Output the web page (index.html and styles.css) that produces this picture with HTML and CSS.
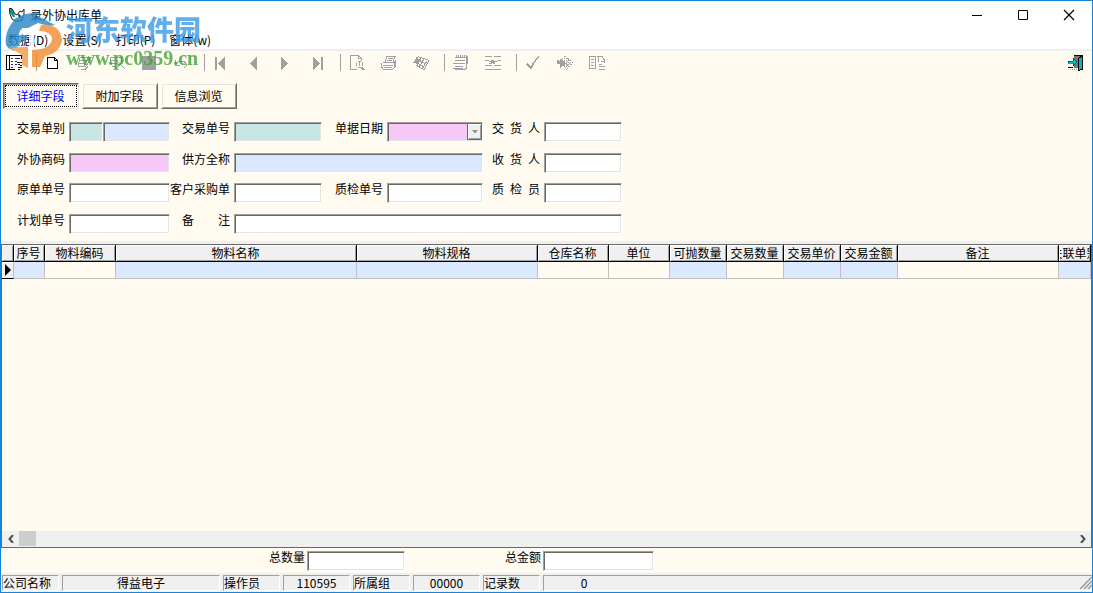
FILE: index.html
```html
<!DOCTYPE html>
<html lang="zh-CN">
<head>
<meta charset="utf-8">
<title>录外协出库单</title>
<link rel="stylesheet" href="styles.css">
</head>
<body>
<div class="window">
  <header class="titlebar">
    <svg class="app-icon" viewBox="0 0 16 14" width="16" height="14"><path d="M0 0h3l2 4 1 5H4L1 5z" fill="#0a9f8c"/><path d="M0 0l3 1 3 5 2 1 3-4 2 1 2-3v6l-2 2v3l-3 1H6L3 11 1 6z" fill="none" stroke="#222"/><path d="M9 5l3 3-2 3z" fill="#222"/><path d="M14 9v3M5 12l3-2" stroke="#0a9f8c" fill="none"/></svg>
    <h1 class="title">录外协出库单</h1>
    <div class="window-controls">
      <button aria-label="最小化"><svg width="12" height="12"><path d="M1 6.500h10" stroke="#000"/></svg></button>
      <button aria-label="最大化"><svg width="12" height="12"><path d="M1.500 1.500h9v9h-9z" fill="none" stroke="#000"/></svg></button>
      <button aria-label="关闭"><svg width="12" height="12"><path d="M1 1l10 10M11 1L1 11" stroke="#000" stroke-width="1.200"/></svg></button>
    </div>
  </header>
  <nav class="menubar">
    <button>数据(D)</button><button>设置(S)</button><button>打印(P)</button><button>窗体(w)</button>
  </nav>

  <div class="toolbar" role="toolbar">
    <button class="tool tool-first" aria-label="列表"><svg viewBox="0 0 16 16" fill="none" stroke="#000"><path d="M0 .5h16M.5 1v13M3.500 1v13M0 14.500h9M15.500 1v3"/><path d="M5 3.500h2M9 3.500h5M5 6.500h2M9 6.500h2M5 9.500h2M9 9.500h2M5 12.500h2" stroke="#22229a"/><path d="M11 7.500h5M12 9.500h2M14 10.500h2M12 12.500h4M12 14.500h2" stroke="#111"/></svg></button>
    <span class="sep"></span>
    <button class="tool" aria-label="新建"><svg viewBox="0 0 16 16"><path d="M2.500 2.500h7l3 3v8h-10z" fill="#fff" stroke="#000"/><path d="M9.500 2.500v3h3" fill="none" stroke="#000"/></svg></button>
    <button class="tool off" aria-label="修改"><svg viewBox="0 0 16 16"><path d="M3 2.500h12M2 5.500h9M1 8.500h8M1 11.500h6M14 3l-5 8-3 1M3 3L1 11M4 14.500h4l3-3M12 3l-5 8"/></svg></button>
    <button class="tool off" aria-label="删除"><svg viewBox="0 0 16 16"><path d="M1 2.500h11M1 5.500h8M1 8.500h8M12 2v5M1 2v7M7 5l9 9M15 5l-8 9M3 11.500h4"/></svg></button>
    <button class="tool off" aria-label="保存"><svg viewBox="0 0 16 16"><path class="solid" d="M1 1h14v14H1z"/></svg></button>
    <button class="tool off" aria-label="撤消"><svg viewBox="0 0 16 16"><path d="M2 5v5h5M3 9l3-3h5l2 3v2l-2 2"/></svg></button>
    <span class="sep"></span>
    <button class="tool off" aria-label="首条"><svg viewBox="0 0 16 16"><path class="solid" d="M2 2h2v13H2zM12 2v13L5 8.500z"/></svg></button>
    <button class="tool off" aria-label="上一条"><svg viewBox="0 0 16 16"><path class="solid" d="M12 2v13L5 8.500z"/></svg></button>
    <button class="tool off" aria-label="下一条"><svg viewBox="0 0 16 16"><path class="solid" d="M4 2v13l7-6.500z"/></svg></button>
    <button class="tool off" aria-label="末条"><svg viewBox="0 0 16 16"><path class="solid" d="M4 2v13l7-6.500zM12 2h2v13h-2z"/></svg></button>
    <span class="sep"></span>
    <button class="tool off" aria-label="预览"><svg viewBox="0 0 16 16"><path d="M8 14.500H1.500V.5h8l3 3v2M9.500.5v3h3M9 6.500h3M7.500 8v3M13.500 7v4M9 12.500h4M10.500 7v4M13 12l3 3M12 13l3 2"/></svg></button>
    <button class="tool off" aria-label="打印"><svg viewBox="0 0 16 16"><path d="M4 6.500l2-5h8l-2 5M7 3.500h5M6 5.500h5M2 7.500h11l2-2M.5 8v4l2 2.500h9l3-3v-5M2 10.500h10M3 12.500h8M13.500 8v4"/></svg></button>
    <button class="tool off" aria-label="打印设置"><svg viewBox="0 0 16 16"><path d="M5 1.500l11 4-5 9-8-4M4 4l9 5M3 7l8 5M8 2.500l-4 8M11 4l-5 8M14 6l-5 8"/><path class="solid" d="M4 1l2 4-1 4-5-1 2-3z"/></svg></button>
    <span class="sep"></span>
    <button class="tool off" aria-label="记录"><svg viewBox="0 0 16 16"><path d="M1.500 2.500h12v11l-2 1h-10M3 0v3M5 0v3M7 0v3M9 0v3M11 0v3M13 0v3M2 5.500h10M0 8.500h12M2 11.500h8M0 13.500h10M14.500 1v8"/></svg></button>
    <button class="tool off" aria-label="插入行"><svg viewBox="0 0 16 16"><path d="M0 1.500h7M9 1.500h7M0 5.500h4M12 5.500h4M0 10.500h7M9 10.500h7M0 14.500h16"/><path class="solid" d="M6 5h3v1h3v1h-2v2H8V8H7v1H4V8h2V7H4V6h2z"/></svg></button>
    <span class="sep"></span>
    <button class="tool off" aria-label="审核"><svg viewBox="0 0 16 16"><path class="thick" d="M2 9l4 4q3-7 8-11"/></svg></button>
    <button class="tool off" aria-label="复核"><svg viewBox="0 0 16 16"><path d="M8 1l8 7-7 7M8 1L4 5M10 3l-4 4M12 5l-5 5M14 7l-6 6M7 3l7 7M7 6l5 6" stroke-dasharray="2 1"/><path class="solid" d="M0 5l3 1 1-3 2 3 2-1v7l-3-1-2 2v-4H0z"/></svg></button>
    <button class="tool off" aria-label="复制"><svg viewBox="0 0 16 16"><path d="M6 1.500H.5v12h6M2 4.500h3M2 7.500h3M2 10.500h3M6.500 1v13M8 1.500h5l2 3v3M9.500 2v5M12 6.500h4M10 9.500h3M10 11.500h6M10 14.500h6"/></svg></button>
    <button class="tool tool-exit" aria-label="退出"><svg viewBox="0 0 16 16"><path d="M6 1h8v12H6z" fill="#777"/><path d="M6 .5h8.500v14" fill="none" stroke="#000"/><path d="M10 4l4-3v13l-4 2z" fill="#00b8b8" stroke="#000"/><path d="M0 6h5V3l4 4-4 4V8H0z" fill="#00c8c8" stroke="#000" stroke-width=".5"/><path d="M0 12.500h5" stroke="#000"/><path d="M2 14.500h8" stroke="#999" stroke-dasharray="1 1"/></svg></button>
  </div>

  <div class="tabs" role="tablist">
    <button class="tab active" role="tab" aria-selected="true"><span>详细字段</span></button>
    <button class="tab" role="tab"><span>附加字段</span></button>
    <button class="tab" role="tab"><span>信息浏览</span></button>
  </div>

  <form class="form">
    <label for="type">交易单别</label>
    <div class="split"><input class="field teal" id="type"><input class="field blue" aria-label="单别名称"></div>
    <label for="no">交易单号</label><input class="field teal" id="no">
    <label for="date">单据日期</label>
    <div class="combo"><select class="field pink" id="date"><option></option></select><span class="combo-arrow"><svg width="6" height="4"><path d="M0 0h6L3 3.500z" fill="#909090"/></svg></span></div>
    <label for="deliver"><span class="spread">交 货 人</span></label><input class="field" id="deliver">

    <label for="vendor">外协商码</label><input class="field pink" id="vendor">
    <label for="supplier">供方全称</label><input class="field blue span3" id="supplier">
    <label for="receiver"><span class="spread">收 货 人</span></label><input class="field" id="receiver">

    <label for="orig">原单单号</label><input class="field" id="orig">
    <label for="po">客户采购单</label><input class="field" id="po">
    <label for="qcno">质检单号</label><input class="field" id="qcno">
    <label for="qc"><span class="spread">质 检 员</span></label><input class="field" id="qc">

    <label for="plan">计划单号</label><input class="field" id="plan">
    <label for="remark"><span class="spread">备 注</span></label><input class="field span5" id="remark">
  </form>

  <main class="grid-panel">
    <table class="grid">
      <colgroup><col class="c-mark"><col class="c-seq"><col class="c-code"><col class="c-name"><col class="c-spec"><col class="c-code"><col class="c-unit"><col class="c-num"><col class="c-num"><col class="c-num"><col class="c-num"><col><col class="c-link"></colgroup>
      <thead><tr><th></th><th>序号</th><th>物料编码</th><th>物料名称</th><th>物料规格</th><th>仓库名称</th><th>单位</th><th>可抛数量</th><th>交易数量</th><th>交易单价</th><th>交易金额</th><th>备注</th><th><span class="clip">关联单别</span></th></tr></thead>
      <tbody><tr><td class="marker"><svg width="6" height="12"><path d="M0 0l6 6-6 6z"/></svg></td><td class="blue"></td><td></td><td class="blue"></td><td class="blue"></td><td></td><td></td><td class="blue"></td><td></td><td class="blue"></td><td class="blue"></td><td></td><td class="blue"></td></tr></tbody>
    </table>
    <div class="scrollbar">
      <button aria-label="向左滚动"><svg width="6" height="8"><path d="M5 0L1.500 4 5 8" fill="none" stroke="#505050" stroke-width="2"/></svg></button>
      <span class="thumb"></span>
      <button class="scroll-right" aria-label="向右滚动"><svg width="6" height="8"><path d="M1 0l3.500 4L1 8" fill="none" stroke="#505050" stroke-width="2"/></svg></button>
    </div>
  </main>

  <div class="totals">
    <label for="qty">总数量</label><input class="field" id="qty">
    <label for="amount">总金额</label><input class="field" id="amount">
  </div>

  <footer class="status">
    <span class="cell w-label">公司名称</span><span class="cell w-company">得益电子</span>
    <span class="cell w-label">操作员</span><span class="cell w-value">110595</span>
    <span class="cell w-label">所属组</span><span class="cell w-value">00000</span>
    <span class="cell w-label">记录数</span><span class="cell w-rest"><span class="count">0</span>
    <svg class="grip" width="13" height="13"><path d="M1 13L13 1M5 13l8-8M9 13l4-4" stroke="#999" stroke-width="1.500"/></svg></span>
  </footer>

  <div class="watermark">
    <svg viewBox="0 0 58 58" width="58" height="58"><path d="M1 34C-1 20 8 6 21 3L34 1 28 9 16 17 12 29 4 38Z" fill="#2586c8"/><path d="M14 17L33 5 50 14 44 15 33 12 17 20Z" fill="#2586c8"/><path d="M4 37Q4 28 13 24H22V29Q16 29 13 35L9 40Z" fill="#3795d2"/><path d="M17 17h21l-3 6h-6v32h-5V23h-9z" fill="#fff"/><path d="M36 14Q55 12 57 29 55 42 40 45L35 56H27V39Q45 39 47 28 46 20 34 20Z" fill="#f28b32"/><path d="M14 36h9v21l-6-3V44L6 37Z" fill="#f39a4b"/></svg>
    <div class="watermark-text"><strong>河东软件园</strong><span>www.pc0359.cn</span></div>
  </div>
</div>
</body>
</html>
```
FILE: styles.css
```css
* { box-sizing: border-box; }
body {
  margin: 0;
  font: 12px/16px "Noto Sans CJK SC", sans-serif;
  color: #000;
}
button, input, select { font: inherit; color: inherit; margin: 0; }
button { padding: 0; border: 0; background: none; }
svg { display: block; }

.window {
  position: relative;
  display: flex;
  flex-direction: column;
  min-height: 100vh;
  border: 1px solid #1883d7;
  background: #fffbf0;
}

.titlebar { display: flex; align-items: center; height: 28px; padding-left: 8px; background: #fff; }
.title { margin: 0 0 0 5px; font-size: 12px; font-weight: normal; }
.window-controls { display: flex; margin-left: auto; }
.window-controls button { display: grid; place-items: center; width: 46px; height: 28px; }

.menubar { display: flex; gap: 14px; height: 22px; padding: 2px 0 0 7px; background: #fff; border-bottom: 2px solid #f0f0f0; }
.menubar button { height: 18px; }

.toolbar { display: flex; align-items: center; height: 23px; }
.tool { display: grid; place-items: center; width: 32px; height: 23px; }
.tool svg { width: 16px; height: 16px; shape-rendering: crispEdges; }
.tool-first { width: 28px; place-items: center start; padding-left: 5px; }
.tool-exit { margin-left: auto; }
.off svg { filter: drop-shadow(1px 1px 0 #fff); }
.off path { fill: none; stroke: #a0a0a0; }
.off .solid { fill: #a0a0a0; stroke: none; }
.off .thick { stroke-width: 1.5; }
.sep { width: 8px; height: 17px; border-right: 1px solid #a0a0a0; }

.tabs { display: flex; gap: 3px; padding: 9px 2px 0; }
.tab {
  width: 76px;
  height: 26px;
  padding: 1px;
  border: 1px solid;
  border-color: #fff #696969 #696969 #fff;
  box-shadow: inset 1px 1px #e3e3e3, inset -1px -1px #a0a0a0;
}
.tab span { display: block; padding: 3px 1px 3px 0; }
.tab.active { color: #00f; border-color: #696969 #e3e3e3 #e3e3e3 #696969; box-shadow: inset 1px 1px #a0a0a0; }
.tab.active span { padding: 2px 1px 2px 0; border: 1px dotted #000; }

.form {
  display: grid;
  grid-template-columns: 68px 101px 64px 88px 65px 96px 61px 78px;
  grid-template-rows: 31px 30px 31px 30px;
  align-items: start;
  padding-top: 13px;
}
.form label { padding-right: 4px; line-height: 12px; text-align: right; white-space: nowrap; }
.spread { display: inline-block; width: 48px; text-align-last: justify; }
.field {
  width: 100%;
  min-width: 0;
  height: 20px;
  padding: 0 3px;
  border: 1px solid;
  border-color: #a0a0a0 #fff #fff #a0a0a0;
  border-radius: 0;
  background: #fff;
  box-shadow: inset 1px 1px #696969, inset -1px -1px #e3e3e3;
  appearance: none;
}
.field.teal { background: #c8e6e4; }
.field.pink { background: #f5c8f5; }
.blue { background: #dbe9ff; }
.span3 { grid-column: span 3; }
.span5 { grid-column: span 5; }
.split { display: grid; grid-template-columns: 34px 1fr; }
.combo { position: relative; }
.combo select { display: block; }
.combo-arrow {
  position: absolute;
  top: 1px;
  right: 1px;
  display: grid;
  place-items: center;
  width: 15px;
  height: 17px;
  border: 1px solid #696969;
  background: #f0f0f0;
  box-shadow: inset 1px 1px #fff, inset -1px -1px #a0a0a0;
  pointer-events: none;
}

.grid-panel {
  flex: 1;
  display: flex;
  flex-direction: column;
  justify-content: space-between;
  border: 1px solid #696969;
  box-shadow: 0 -3px #f0f0f0;
}
.grid { width: 100%; table-layout: fixed; border-spacing: 0; }
.c-mark { width: 12px; }
.c-seq { width: 31px; }
.c-code { width: 71px; }
.c-name { width: 241px; }
.c-spec { width: 181px; }
.c-unit { width: 61px; }
.c-num { width: 57px; }
.c-link { width: 32px; }
.grid th {
  height: 17px;
  padding: 0 1px 0 0;
  overflow: hidden;
  border-right: 1px solid #000;
  border-bottom: 1px solid #000;
  background: #f0f0f0;
  box-shadow: inset 1px 1px #fff, inset -1px -1px #a0a0a0;
  font-weight: normal;
  line-height: 16px;
  white-space: nowrap;
}
.clip { display: flex; justify-content: center; margin-left: 1px; overflow: hidden; }
.grid td { height: 17px; padding: 0; border-right: 1px solid #c0c0c0; border-bottom: 1px solid #c0c0c0; }
.grid .marker { padding-left: 3px; border-bottom-color: #000; background: #f0f0f0; box-shadow: inset 1px 1px #fff; }

.scrollbar { display: flex; height: 16px; background: #f0f0f0; }
.scrollbar button { display: grid; place-items: center; width: 17px; height: 15px; }
.thumb { width: 17px; height: 15px; background: #cdcdcd; }
.scroll-right { margin-left: auto; }

.totals {
  display: grid;
  grid-template-columns: 306px 98px 138px 111px;
  height: 25px;
  padding-top: 3px;
}
.totals label { padding-right: 2px; line-height: 12px; text-align: right; }

.status { display: flex; gap: 3px; height: 19px; padding: 2px 0 1px 1px; background: #f0f0f0; }
.cell {
  height: 16px;
  overflow: hidden;
  border: 1px solid;
  border-color: #a0a0a0 #fff #fff #a0a0a0;
  text-align: center;
  line-height: 14px;
  white-space: nowrap;
}
.w-label { width: 57px; text-align: left; }
.w-company { width: 158px; }
.w-value { width: 67px; }
.w-rest { flex: 1; display: flex; justify-content: space-between; border-right: 0; }
.count { width: 80px; }

.watermark {
  position: absolute;
  top: 10px;
  left: 4px;
  display: flex;
  gap: 3px;
  opacity: .8;
  pointer-events: none;
}
.watermark-text { display: flex; flex-direction: column; }
.watermark strong { font-size: 27px; line-height: 36px; font-weight: 900; color: #3a9ae8; }
.watermark-text span { font: bold 20px/22px "Liberation Serif", serif; color: #3fa535; }
```
